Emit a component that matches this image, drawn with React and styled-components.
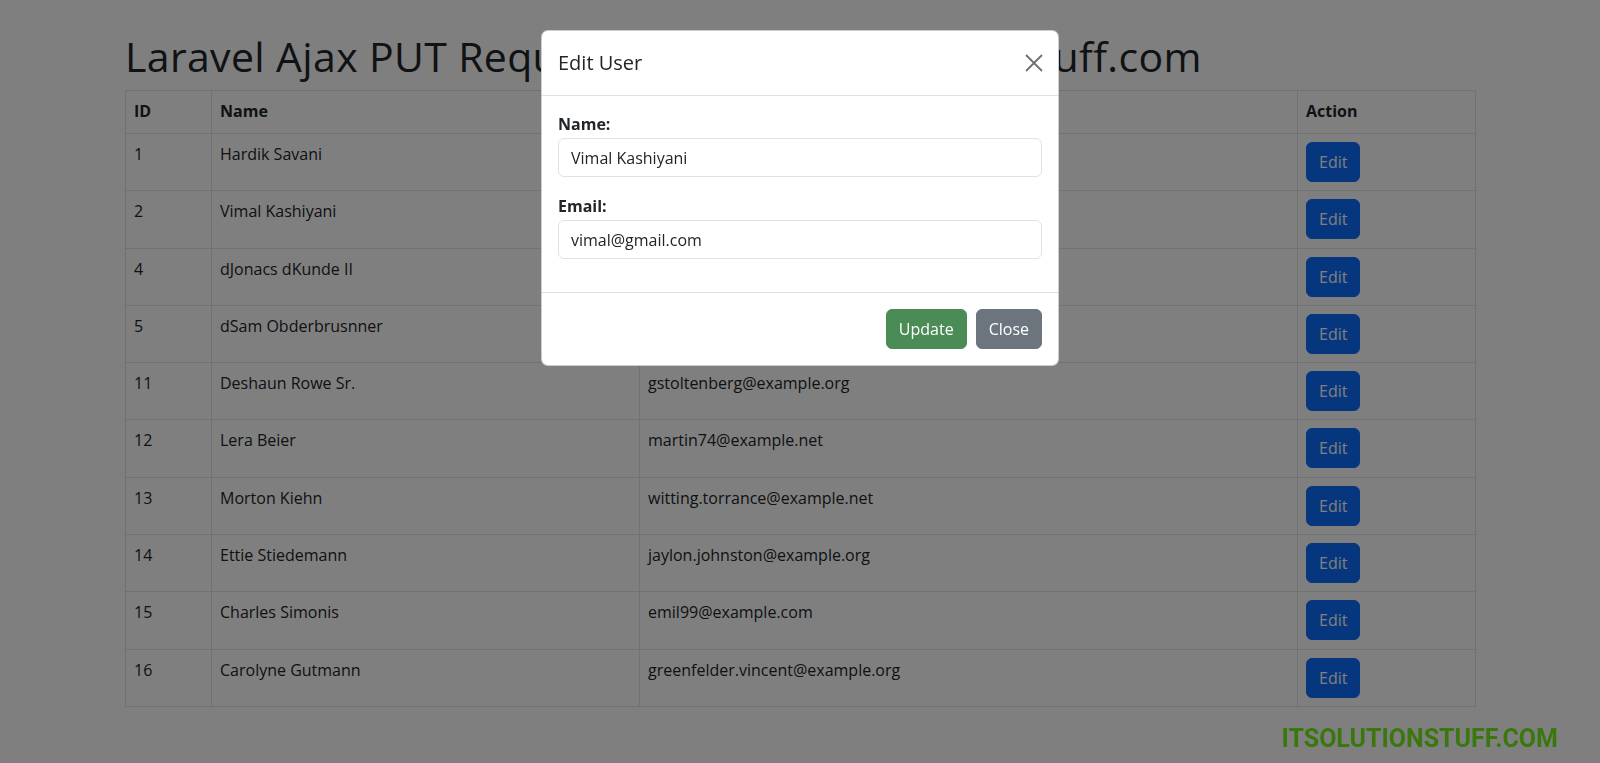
import React from 'react';
import styled, { createGlobalStyle } from 'styled-components';

const GlobalStyle = createGlobalStyle`
  html, body {
    margin: 0;
    padding: 0;
    background: #fff;
    color: #212529;
    font-family: "Open Sans", "Noto Sans", sans-serif;
    font-size: 16px;
    line-height: 1.5;
    overflow: hidden;
  }
  * { box-sizing: border-box; }
`;

const Page = styled.div`
  width: 1350px;
  margin: 0 auto;
  padding-top: 33px;
`;

const Heading = styled.h1`
  margin: 0 0 9px;
  font-size: 41px;
  font-weight: 500;
  letter-spacing: 0.35px;
  line-height: 1.17;
  white-space: nowrap;
`;

const Table = styled.table`
  width: 100%;
  table-layout: fixed;
  border-collapse: collapse;
  border: 1px solid #dee2e6;
`;

const Th = styled.th`
  width: ${p => p.w}px;
  text-align: left;
  font-weight: 700;
  padding: 8px 8px 10px;
  border: 1px solid #dee2e6;
  vertical-align: top;
`;

const Td = styled.td`
  padding: 8px 8px 8.3px;
  border: 1px solid #dee2e6;
  vertical-align: top;
  white-space: nowrap;
`;

const Btn = styled.button`
  height: 40px;
  padding: 0 12px;
  border: 1px solid ${p => p.bg};
  border-radius: 6px;
  background: ${p => p.bg};
  color: #fff;
  font-family: inherit;
  font-size: 16px;
  line-height: 1.5;
  cursor: pointer;
`;

const Backdrop = styled.div`
  position: fixed;
  inset: 0;
  background: rgba(0, 0, 0, 0.5);
`;

const ModalWrap = styled.div`
  position: fixed;
  inset: 0;
  display: flex;
  justify-content: center;
  align-items: flex-start;
`;

const Dialog = styled.div`
  width: 518px;
  margin-top: 30px;
  background: #fff;
  border: 1px solid rgba(0, 0, 0, 0.2);
  border-radius: 7px;
`;

const ModalHeader = styled.div`
  height: 65px;
  padding: 0 16px;
  display: flex;
  align-items: center;
  justify-content: space-between;
  border-bottom: 1px solid #dee2e6;
`;

const ModalTitle = styled.h5`
  margin: 0;
  font-size: 20px;
  font-weight: 500;
  line-height: 1.5;
`;

const CloseX = styled.button`
  width: 18px;
  height: 18px;
  padding: 0;
  margin-right: -1px;
  border: 0;
  background: transparent;
  display: flex;
  cursor: pointer;
`;

const ModalBody = styled.div`
  padding: 16px;
`;

const Group = styled.div`
  margin-bottom: 17px;
`;

const Label = styled.strong`
  display: block;
  margin-bottom: 2px;
`;

const Input = styled.input`
  display: block;
  width: 100%;
  height: 39px;
  padding: 0 12px;
  border: 1px solid #dee2e6;
  border-radius: 6px;
  font-family: inherit;
  font-size: 16px;
  color: #212529;
`;

const ModalFooter = styled.div`
  display: flex;
  justify-content: flex-end;
  gap: 9px;
  padding: 16px;
  border-top: 1px solid #dee2e6;
`;

const Watermark = styled.div`
  position: fixed;
  top: 726px;
  right: 42px;
  font-family: Roboto, "Liberation Sans", sans-serif;
  font-weight: 700;
  font-size: 25px;
  line-height: 1;
  color: #3a780e;
`;

const users = [
  [1, 'Hardik Savani', 'hardik@gmail.com'],
  [2, 'Vimal Kashiyani', 'vimal@gmail.com'],
  [4, 'dJonacs dKunde II', 'dkunde@example.com'],
  [5, 'dSam Obderbrusnner', 'sam@example.com'],
  [11, 'Deshaun Rowe Sr.', 'gstoltenberg@example.org'],
  [12, 'Lera Beier', 'martin74@example.net'],
  [13, 'Morton Kiehn', 'witting.torrance@example.net'],
  [14, 'Ettie Stiedemann', 'jaylon.johnston@example.org'],
  [15, 'Charles Simonis', 'emil99@example.com'],
  [16, 'Carolyne Gutmann', 'greenfelder.vincent@example.org'],
];

export default function App() {
  return (
    <>
      <GlobalStyle />
      <Page>
        <Heading>Laravel Ajax PUT Request Example - ItSolutionStuff.com</Heading>
        <Table>
          <thead>
            <tr>
              <Th w={86}>ID</Th>
              <Th w={428}>Name</Th>
              <Th w={658}>Email</Th>
              <Th w={178}>Action</Th>
            </tr>
          </thead>
          <tbody>
            {users.map(([id, name, email]) => (
              <tr key={id}>
                <Td>{id}</Td>
                <Td>{name}</Td>
                <Td>{email}</Td>
                <Td><Btn bg="#0d6efd">Edit</Btn></Td>
              </tr>
            ))}
          </tbody>
        </Table>
      </Page>

      <Backdrop />

      <ModalWrap>
        <Dialog>
          <ModalHeader>
            <ModalTitle>Edit User</ModalTitle>
            <CloseX aria-label="Close">
              <svg width="18" height="18" viewBox="0 0 18 18">
                <path d="M1 1 L17 17 M17 1 L1 17" stroke="#6f6f6f" strokeWidth="1.8" fill="none" />
              </svg>
            </CloseX>
          </ModalHeader>
          <ModalBody>
            <Group>
              <Label>Name:</Label>
              <Input defaultValue="Vimal Kashiyani" />
            </Group>
            <Group>
              <Label>Email:</Label>
              <Input defaultValue="vimal@gmail.com" />
            </Group>
          </ModalBody>
          <ModalFooter>
            <Btn bg="#4a8b56">Update</Btn>
            <Btn bg="#6c757d">Close</Btn>
          </ModalFooter>
        </Dialog>
      </ModalWrap>

      <Watermark>ITSOLUTIONSTUFF.COM</Watermark>
    </>
  );
}
